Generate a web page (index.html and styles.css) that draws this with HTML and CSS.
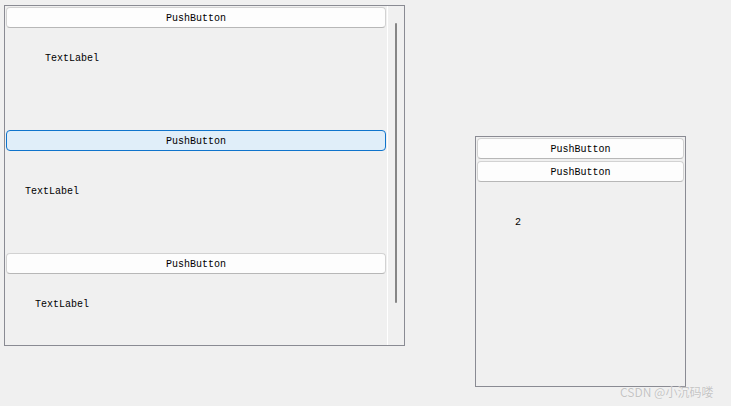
FILE: index.html
```html
<!DOCTYPE html>
<html>
<head>
<meta charset="utf-8">
<link rel="stylesheet" href="styles.css">
</head>
<body>
<div class="page">
  <div class="frame frame-left">
    <div class="content">
      <button class="btn">PushButton</button>
      <div class="label-block lb1"><span class="label">TextLabel</span></div>
      <button class="btn btn-focus">PushButton</button>
      <div class="label-block lb2"><span class="label">TextLabel</span></div>
      <button class="btn">PushButton</button>
      <div class="label-block lb3"><span class="label">TextLabel</span></div>
    </div>
    <div class="scrollbar"><div class="thumb"></div></div>
  </div>
  <div class="frame frame-right">
    <button class="btn">PushButton</button>
    <button class="btn">PushButton</button>
    <div class="label-block lb4"><span class="label">2</span></div>
  </div>
</div>
<div class="watermark">CSDN @小沉码喽</div>
</body>
</html>
```
FILE: styles.css
```css
html, body {
  margin: 0;
  padding: 0;
  background: #f0f0f0;
  width: 731px;
  height: 406px;
  overflow: hidden;
  position: relative;
  font-family: "Liberation Mono", "Courier New", monospace;
  font-size: 10px;
  color: #000;
}
.page {
  display: flex;
  align-items: flex-start;
}
.frame {
  border: 1px solid #8a8b93;
  box-sizing: border-box;
  background: #f0f0f0;
}
.frame-left {
  margin: 5px 0 0 4px;
  width: 401px;
  height: 341px;
  display: flex;
}
.content {
  width: 383px;
  box-sizing: border-box;
  border-right: 1px solid #ffffff;
  padding: 1px 1px 0 1px;
  display: flex;
  flex-direction: column;
}
.scrollbar {
  width: 16px;
  padding: 17px 0 0 7px;
  box-sizing: border-box;
}
.thumb {
  width: 2px;
  height: 280px;
  background: #868686;
  border-radius: 1px;
}
.btn {
  display: flex;
  align-items: center;
  justify-content: center;
  height: 21px;
  width: 100%;
  box-sizing: border-box;
  border: 1px solid #d2d2d2;
  border-bottom-color: #b7b7b7;
  border-radius: 4px;
  background: #fdfdfd;
  font-family: "Liberation Mono", "Courier New", monospace;
  font-size: 10px;
  color: #000;
  padding: 2px 0 0 0;
  margin: 0;
  flex: none;
}
.btn-focus {
  background: #e0eef9;
  border: 1px solid #0f74cc;
}
.label-block {
  box-sizing: border-box;
  line-height: 12px;
  flex: none;
}
.lb1 { height: 102px; padding: 25px 0 0 39px; }
.lb2 { height: 102px; padding: 35px 0 0 19px; }
.lb3 { padding: 25px 0 0 29px; }
.frame-right {
  margin: 136px 0 0 70px;
  width: 211px;
  height: 251px;
  padding: 1px 1px 0 1px;
  display: flex;
  flex-direction: column;
  gap: 2px;
}
.lb4 { padding: 33px 0 0 38px; }
.watermark {
  position: absolute;
  left: 620px;
  top: 384px;
  font-family: "Noto Sans CJK SC", "Noto Sans", sans-serif;
  font-size: 12px;
  line-height: 16px;
  color: #c4c4c4;
  text-shadow: 0 0 1px #ffffff;
}
```
